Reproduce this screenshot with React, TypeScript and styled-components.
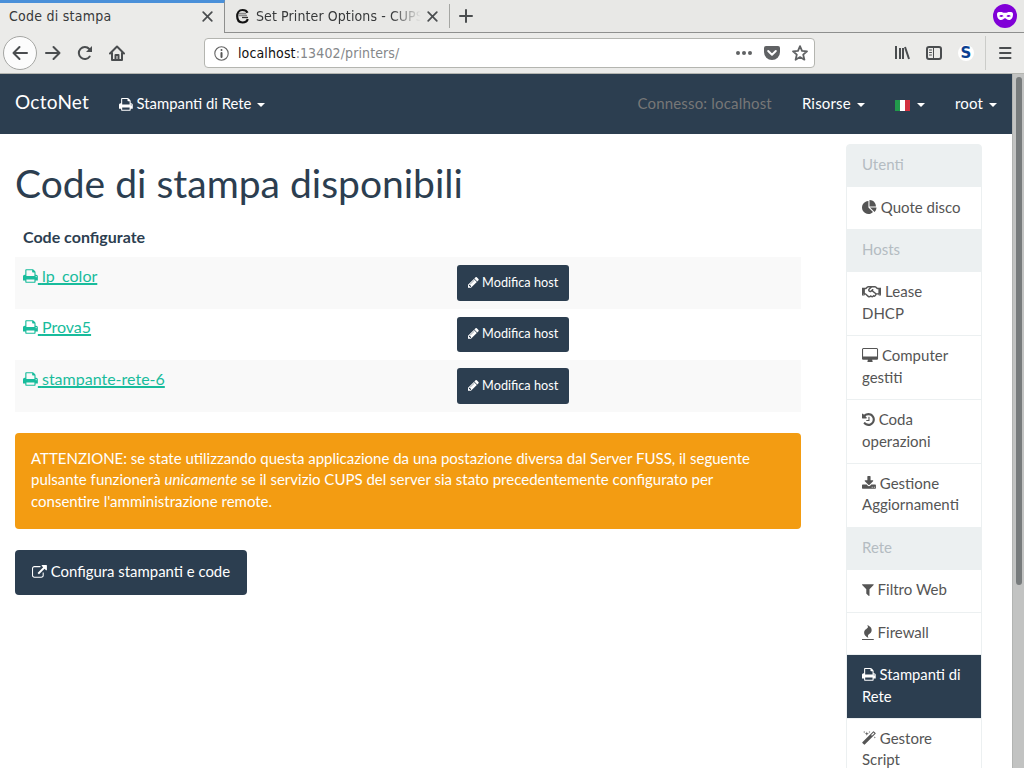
import React from "react";
import styled, { createGlobalStyle, css } from "styled-components";
import { FaRegHandshake } from "react-icons/fa";

const Global = createGlobalStyle`
  * { box-sizing: border-box; }
  body {
    margin: 0;
    background: #fff;
    color: #2c3e50;
    font: 15px/21.43px Lato, "Liberation Sans", sans-serif;
    overflow: hidden;
  }
`;

/* ---------- icons ---------- */

const glyphs = {
  print: { x: 64, w: 1664, d: "M448 1536h896v-256h-896v256zm0-640h896v-384h-160q-40 0-68-28t-28-68v-160h-640v640zm1152 64q0-26-19-45t-45-19-45 19-19 45 19 45 45 19 45-19 19-45zm128 0v416q0 13-9.5 22.5t-22.5 9.5h-224v160q0 40-28 68t-68 28h-960q-40 0-68-28t-28-68v-160h-224q-13 0-22.5-9.5t-9.5-22.5v-416q0-79 56.5-135.5t135.5-56.5h64v-544q0-40 28-68t68-28h672q40 0 88 20t76 48l152 152q28 28 48 76t20 88v256h64q79 0 135.5 56.5t56.5 135.5z" },
  pencil: { x: 128, w: 1536, d: "M491 1536l91-91-235-235-91 91v107h128v128h107zm523-928q0-22-22-22-10 0-17 7l-542 542q-7 7-7 17 0 22 22 22 10 0 17-7l542-542q7-7 7-17zm-54-192l416 416-832 832h-416v-416zm683 96q0 53-37 90l-166 166-416-416 166-165q36-38 90-38 53 0 91 38l235 234q37 39 37 91z" },
  external: { x: 0, w: 1792, d: "M1408 928v320q0 119-84.5 203.5t-203.5 84.5h-832q-119 0-203.5-84.5t-84.5-203.5v-832q0-119 84.5-203.5t203.5-84.5h704q14 0 23 9t9 23v64q0 14-9 23t-23 9h-704q-66 0-113 47t-47 113v832q0 66 47 113t113 47h832q66 0 113-47t47-113v-320q0-14 9-23t23-9h64q14 0 23 9t9 23zm384-864v512q0 26-19 45t-45 19-45-19l-176-176-652 652q-10 10-23 10t-23-10l-114-114q-10-10-10-23t10-23l652-652-176-176q-19-19-19-45t19-45 45-19h512q26 0 45 19t19 45z" },
  history: { x: 128, w: 1536, d: "M1664 896q0 156-61 298t-164 245-245 164-298 61q-172 0-327-72.5t-264-204.5q-7-10-6.5-22.5t8.5-20.5l137-138q10-9 25-9 16 2 23 12 73 95 179 147t225 52q104 0 198.5-40.5t163.5-109.5 109.5-163.5 40.5-198.5-40.5-198.5-109.5-163.5-163.5-109.5-198.5-40.5q-98 0-188 35.5t-160 101.5l137 138q31 30 14 69-17 40-59 40h-448q-26 0-45-19t-19-45v-448q0-42 40-59 39-17 69 14l130 129q107-101 244.5-156.5t284.5-55.5q156 0 298 61t245 164 164 245 61 298zm-640-288v448q0 14-9 23t-23 9h-320q-14 0-23-9t-9-23v-64q0-14 9-23t23-9h224v-352q0-14 9-23t23-9h64q14 0 23 9t9 23z" },
  desktop: { x: -64, w: 1920, d: "M1728 992v-832q0-13-9.5-22.5t-22.5-9.5h-1600q-13 0-22.5 9.5t-9.5 22.5v832q0 13 9.5 22.5t22.5 9.5h1600q13 0 22.5-9.5t9.5-22.5zm128-832v1088q0 66-47 113t-113 47h-544q0 37 16 77.5t32 71 16 43.5q0 26-19 45t-45 19h-512q-26 0-45-19t-19-45q0-14 16-44t32-70 16-78h-544q-66 0-113-47t-47-113v-1088q0-66 47-113t113-47h1600q66 0 113 47t47 113z" },
  download: { x: 64, w: 1664, d: "M1344 1344q0-26-19-45t-45-19-45 19-19 45 19 45 45 19 45-19 19-45zm256 0q0-26-19-45t-45-19-45 19-19 45 19 45 45 19 45-19 19-45zm128-224v320q0 40-28 68t-68 28h-1472q-40 0-68-28t-28-68v-320q0-40 28-68t68-28h465l135 136q58 56 136 56t136-56l136-136h464q40 0 68 28t28 68zm-325-569q17 41-14 70l-448 448q-18 19-45 19t-45-19l-448-448q-31-29-14-70 17-39 59-39h256v-448q0-26 19-45t45-19h256q26 0 45 19t19 45v448h256q42 0 59 39z" },
  filter: { x: 192, w: 1408, d: "M1595 295q17 41-14 70l-493 493v742q0 42-39 59-13 5-25 5-27 0-45-19l-256-256q-19-19-19-45v-486l-493-493q-31-29-14-70 17-39 59-39h1280q42 0 59 39z" },
  pie: { x: 0, w: 1792, d: "M768 890l546 546q-106 108-247.5 168t-298.5 60q-209 0-385.5-103t-279.5-279.5-103-385.5 103-385.5 279.5-279.5 385.5-103v762zm187 6h773q0 157-60 298.5t-168 247.5zm709-128h-768v-768q209 0 385.5 103t279.5 279.5 103 385.5z" },
  fire: { x: 192, w: 1408, d: "M1600 1696v64q0 13-9.5 22.5t-22.5 9.5h-1344q-13 0-22.5-9.5t-9.5-22.5v-64q0-13 9.5-22.5t22.5-9.5h1344q13 0 22.5 9.5t9.5 22.5zm-256-1056q0 78-24.5 144t-64 112.5-87.5 88-96 77.5-87.5 72-64 81.5-24.5 96.5q0 96 67 224l-4-1 1 1q-90-41-160-83t-138.5-100-113.5-122.5-72.5-150.5-27.5-184q0-78 24.5-144t64-112.5 87.5-88 96-77.5 87.5-72 64-81.5 24.5-96.5q0-94-66-224l3 1-1-1q90 41 160 83t138.5 100 113.5 122.5 72.5 150.5 27.5 184z" },
  magic: { x: 64, w: 1664, d: "M1254 581l293-293-107-107-293 293zm447-293q0 27-18 45l-1286 1286q-18 18-45 18t-45-18l-198-198q-18-18-18-45t18-45l1286-1286q18-18 45-18t45 18l198 198q18 18 18 45zm-1351-190l98 30-98 30-30 98-30-98-98-30 98-30 30-98zm350 162l196 60-196 60-60 196-60-196-196-60 196-60 60-196zm930 478l98 30-98 30-30 98-30-98-98-30 98-30 30-98zm-640-640l98 30-98 30-30 98-30-98-98-30 98-30 30-98z" },
};
type GlyphName = keyof typeof glyphs;

const GlyphSvg = styled.svg<{ $ratio: number }>`
  display: inline-block;
  height: 1em;
  width: ${(p) => p.$ratio}em;
  vertical-align: -0.143em;
  fill: currentColor;
  overflow: visible;
`;
const Glyph = ({ name }: { name: GlyphName }) => {
  const g = glyphs[name];
  return (
    <GlyphSvg $ratio={g.w / 1792} viewBox={`${g.x} 0 ${g.w} 1792`}>
      <path d={g.d} />
    </GlyphSvg>
  );
};
const Handshake = styled(FaRegHandshake)`
  width: 1.286em;
  height: 1.03em;
  vertical-align: -0.143em;
`;

/* ---------- browser chrome ---------- */

const Chrome = styled.header`
  height: 74px;
  background: #ebebe9;
  border-bottom: 1px solid #b4b5b0;
  font: 14px/20px "DejaVu Sans Condensed", "DejaVu Sans", sans-serif;
  font-stretch: condensed;
  letter-spacing: 0.1px;
  color: #37393a;
`;
const TabBar = styled.div`
  display: flex;
  height: 33px;
  background: #e8e8e6;
`;
const Tab = styled.div<{ $active?: boolean }>`
  display: flex;
  align-items: center;
  flex: none;
  width: 224px;
  padding: 0 11px 0 9px;
  border-bottom: 1px solid #8e8f8e;
  ${(p) =>
    p.$active &&
    css`
      width: 225px;
      border-top: 3px solid #4a90d9;
      border-bottom: 0;
      border-right: 1px solid #8e8f8e;
      background: #ebebe9;
      padding-bottom: 4px;
      letter-spacing: 0.25px;
    `}
`;
const TabTitle = styled.span<{ $fade?: boolean }>`
  flex: 1;
  overflow: hidden;
  white-space: nowrap;
  ${(p) => p.$fade && css`
    margin: 0 6px 0 6px;
    mask-image: linear-gradient(to right, #000 82%, transparent);
  `}
`;
const TabRest = styled.div`
  flex: 1;
  display: flex;
  align-items: center;
  justify-content: space-between;
  padding: 0 7px 0 0;
  border-bottom: 1px solid #8e8f8e;
`;
const NewTab = styled.div`
  display: flex;
  align-items: center;
  height: 24px;
  padding-left: 9px;
  border-left: 1px solid #a5a6a3;
`;
const Toolbar = styled.div`
  display: flex;
  align-items: center;
  height: 40px;
  padding: 0 12px 0 3px;
`;
const Back = styled.div`
  width: 34px;
  height: 34px;
  display: grid;
  place-items: center;
  border: 1px solid #a5a6a3;
  border-radius: 50%;
  background: #fcfcfc;
`;
const NavIcons = styled.div`
  display: flex;
  gap: 16px;
  padding: 0 79px 0 8px;
`;
const UrlBox = styled.div`
  display: flex;
  align-items: center;
  width: 611px;
  height: 30px;
  padding: 0 6px 0 9px;
  background: #fff;
  border: 1px solid #b4b5b0;
  border-radius: 4px;
`;
const Url = styled.span`
  flex: 1;
  padding-left: 9px;
  color: #85878a;
  letter-spacing: 0.12px;
  b { font-weight: normal; color: #111; }
`;
const UrlIcons = styled.div`
  display: flex;
  gap: 12px;
`;
const ToolIcons = styled.div`
  display: flex;
  align-items: center;
  gap: 16px;
  margin-left: auto;
`;
const ToolDivider = styled.span`
  width: 1px;
  height: 34px;
  margin: 0 -5px 0 -5px;
  background: #cbccc9;
`;
const ToolMenu = styled.span`
  display: flex;
  margin-left: 1px;
`;
const Line = styled.svg`
  display: block;
  flex: none;
  fill: none;
  stroke: #4a4d4f;
  stroke-width: 2;
  stroke-linecap: round;
  stroke-linejoin: round;
`;

const CloseX = () => (
  <Line width="11" height="11" viewBox="0 0 11 11"><path d="M1.2 1.2l8.6 8.6M9.8 1.2l-8.6 8.6" strokeWidth="1.7" /></Line>
);
const SBadge = styled.span`
  width: 16px;
  height: 16px;
  border-radius: 50%;
  background: #fff;
  color: #0b3f91;
  font: bold 15px/17px "DejaVu Sans", sans-serif;
  text-align: center;
`;

const BrowserChrome = () => (
  <Chrome>
    <TabBar>
      <Tab $active><TabTitle>Code di stampa</TabTitle><CloseX /></Tab>
      <Tab>
        <svg width="16" height="16" viewBox="0 0 16 16">
          <path d="M13.500 4.800C12.600 2.700 10.500 2 8.500 2C5 2 3.200 4.800 3.200 8.300s1.800 6.200 5.300 6.200C11.500 14.500 13.200 13 13.700 11" fill="none" stroke="#111" strokeWidth="2.200" />
          <path d="M5 5.500h7M4.500 7.500h8.500" stroke="#8a8a8a" strokeWidth="1.300" />
          <path d="M8 9.500h6" stroke="#333" strokeWidth="1.300" />
        </svg>
        <TabTitle $fade>Set Printer Options - CUPS</TabTitle><CloseX />
      </Tab>
      <TabRest>
        <NewTab><Line width="14" height="14" viewBox="0 0 14 14"><path d="M7 1v12M1 7h12" /></Line></NewTab>
        <svg width="24" height="24" viewBox="0 0 24 24">
          <circle cx="12" cy="12" r="12" fill="#8000d7" />
          <path fillRule="evenodd" fill="#fff" d="M4 10c0-1.800 1.500-2 3.500-2 2 0 2.500.8 4.500.8S14.500 8 16.500 8c2 0 3.500.2 3.500 2 0 3.500-1.400 6-4 6-2 0-2.600-1.800-4-1.800S10 16 8 16c-2.600 0-4-2.500-4-6zm2.300 2c.7 1.200 3.500 1.200 4.200 0-.9-1.500-3.300-1.500-4.200 0zm7.200 0c.7 1.200 3.500 1.200 4.200 0-.9-1.500-3.300-1.500-4.200 0z" />
        </svg>
      </TabRest>
    </TabBar>
    <Toolbar>
      <Back><Line width="16" height="16" viewBox="0 0 16 16"><path d="M15 8H1.500M7.500 2l-6 6 6 6" /></Line></Back>
      <NavIcons>
        <Line width="16" height="16" viewBox="0 0 16 16"><path d="M1 8h13.500M8.500 2l6 6-6 6" /></Line>
        <Line width="16" height="16" viewBox="0 0 16 16"><path d="M12.700 11.500A6 6 0 1 1 12.300 4L14 6" /><path d="M15 1v6H9z" fill="#4a4d4f" stroke="none" /></Line>
        <Line width="16" height="16" viewBox="0 0 16 16"><path d="M1 8.500L8 1.500l7 7M3 8v7h10V8" /><path d="M6.500 15v-5h3v5" /></Line>
      </NavIcons>
      <UrlBox>
        <Line width="15" height="15" viewBox="0 0 15 15"><circle cx="7.500" cy="7.500" r="6.700" strokeWidth="1.100" stroke="#666" /><path d="M7.500 7v4M7.500 4v.1" stroke="#555" /></Line>
        <Url><b>localhost</b>:13402/printers/</Url>
        <UrlIcons>
          <svg width="16" height="16" viewBox="0 0 16 16" fill="#606264"><circle cx="2" cy="8" r="2" /><circle cx="8" cy="8" r="2" /><circle cx="14" cy="8" r="2" /></svg>
          <svg width="16" height="16" viewBox="0 0 16 16"><path d="M2 1h12q2 0 2 2v4a8 8 0 0 1-16 0V3q0-2 2-2z" fill="#606264" /><path d="M4.200 6l3.800 3.700L11.800 6" fill="none" stroke="#fff" strokeWidth="2" strokeLinecap="round" strokeLinejoin="round" /></svg>
          <Line width="16" height="16" viewBox="0 0 16 16"><path d="M8 1.200l2 4.600 5 .5-3.800 3.300L12.400 14.700 8 12.100l-4.400 2.600L4.800 9.600 1 6.300l5-.5z" strokeWidth="1.800" stroke="#606264" /></Line>
        </UrlIcons>
      </UrlBox>
      <ToolIcons>
        <Line width="16" height="16" viewBox="0 0 16 16"><path d="M2 1v13M6 3v11M9 3v11M11 2l4 12" strokeLinecap="butt" /></Line>
        <Line width="16" height="16" viewBox="0 0 16 16"><rect x="1" y="2" width="14" height="12" rx="2" /><path d="M7.500 2v12M3.500 5h2M3.500 7.500h2M3.500 10h2" strokeWidth="1" /></Line>
        <SBadge>S</SBadge>
        <ToolDivider />
        <ToolMenu><Line width="14" height="14" viewBox="0 0 14 14"><path d="M2 2h10.500M2 7h10.500M2 12h10.500" /></Line></ToolMenu>
      </ToolIcons>
    </Toolbar>
  </Chrome>
);

/* ---------- page ---------- */

const Viewport = styled.div`
  display: flex;
  height: 694px;
  overflow: hidden;
`;
const Page = styled.div`
  flex: 1;
  height: 694px;
  overflow: hidden;
`;
const ScrollTrack = styled.div`
  width: 12px;
  padding: 3px 2px 0 3px;
  background: #c2c3c2;
  border-left: 1px solid #b2b4b2;
`;
const ScrollThumb = styled.div`
  width: 6px;
  height: 508px;
  border-radius: 3px;
  background: #777b7c;
`;
const Navbar = styled.nav`
  display: flex;
  align-items: center;
  height: 60px;
  padding: 0 15px;
  background: #2c3e50;
  color: #fff;
`;
const Brand = styled.span`
  width: 104px;
  padding-bottom: 4px;
  font-size: 19px;
  letter-spacing: 0.25px;
`;
const NavItem = styled.span<{ $muted?: boolean; $tight?: boolean }>`
  display: flex;
  align-items: center;
  white-space: pre;
  color: ${(p) => (p.$muted ? "#777" : "#fff")};
  letter-spacing: ${(p) => (p.$tight ? "normal" : "0.18px")};
  font-size: ${(p) => (p.$tight ? "14.85px" : "15px")};
`;
const NavRight = styled.div`
  display: flex;
  gap: 30px;
  margin-left: auto;
`;
const Caret = styled.span`
  margin-left: 6px;
  margin-top: 2px;
  border: 4px solid transparent;
  border-top-color: currentColor;
  border-bottom: 0;
`;
const Flag = styled.span`
  width: 15px;
  height: 11px;
  margin-top: 2px;
  margin-right: 1px;
  background: linear-gradient(to right, #219a4b 33%, #fff 33% 67%, #d32f3e 67%);
`;
const Columns = styled.div`
  display: flex;
  justify-content: space-between;
  padding: 0 30px 0 15px;
`;
const Main = styled.main`
  width: 786px;
  padding-top: 28px;
`;
const Title = styled.h1`
  margin: 0 0 13px;
  font-size: 39px;
  font-weight: 400;
  line-height: 43px;
`;
const Table = styled.div`
  display: grid;
  font-size: 16px;
`;
const HeadRow = styled.div`
  height: 39px;
  padding: 8px 8px 0;
  font-weight: 700;
  font-size: 16px;
  letter-spacing: normal;
`;
const Row = styled.div<{ $striped: boolean }>`
  display: grid;
  grid-template-columns: 434px 1fr;
  align-items: start;
  height: 51.5px;
  padding: 8px;
  background: ${(p) => (p.$striped ? "#f9f9f9" : "#fff")};
`;
const PrinterLink = styled.a`
  margin-top: -0.4px;
  color: #18bc9c;
  white-space: pre;
  span { text-decoration: underline; text-decoration-skip-ink: none; text-decoration-thickness: 2px; text-underline-offset: 1px; }
`;
const Button = styled.button<{ $small?: boolean }>`
  display: inline-block;
  justify-self: start;
  height: ${(p) => (p.$small ? "35.5px" : "45px")};
  padding: ${(p) => (p.$small ? "0 11px 2px" : "0 17px 1.4px")};
  border: 0;
  border-radius: ${(p) => (p.$small ? "3px" : "4px")};
  background: #2c3e50;
  color: #fff;
  font-family: inherit;
  font-size: ${(p) => (p.$small ? "12.7px" : "14.92px")};
  white-space: nowrap;
`;
const Alert = styled.p`
  height: 96px;
  margin: 21px 0;
  padding: 15.4px 16px 0;
  border-radius: 4px;
  background: #f39c12;
  color: #fff;
`;
const Sidebar = styled.aside`
  width: 136px;
  margin-top: 10px;
`;
const SideItem = styled.div<{ $kind?: "heading" | "active" }>`
  margin-bottom: -1px;
  padding: 9.2px 15px 10.8px;
  border: 1px solid #ecf0f1;
  color: #555;
  &:first-child { border-radius: 4px 4px 0 0; }
  ${(p) => p.$kind === "heading" && css`
    background: #ecf0f1;
    color: #b4bcc2;
  `}
  ${(p) => p.$kind === "active" && css`
    background: #2c3e50;
    background-clip: padding-box;
    color: #fff;
    font-size: 14.8px;
  `}
`;

const printers = ["lp_color", "Prova5", "stampante-rete-6"];

const App = () => (
  <>
    <Global />
    <BrowserChrome />
    <Viewport>
      <Page>
        <Navbar>
          <Brand>OctoNet</Brand>
          <NavItem $tight><Glyph name="print" /> Stampanti di Rete<Caret /></NavItem>
          <NavRight>
            <NavItem $muted>Connesso: localhost</NavItem>
            <NavItem>Risorse<Caret /></NavItem>
            <NavItem><Flag /><Caret /></NavItem>
            <NavItem>root<Caret /></NavItem>
          </NavRight>
        </Navbar>
        <Columns>
          <Main>
            <Title>Code di stampa disponibili</Title>
            <Table>
              <HeadRow>Code configurate</HeadRow>
              {printers.map((name, i) => (
                <Row key={name} $striped={i % 2 === 0}>
                  <PrinterLink><Glyph name="print" /><span> {name}</span></PrinterLink>
                  <Button $small><Glyph name="pencil" /> Modifica host</Button>
                </Row>
              ))}
            </Table>
            <Alert>
              ATTENZIONE: se state utilizzando questa applicazione da una postazione diversa dal Server FUSS, il seguente pulsante funzionerà <em>unicamente</em> se il servizio CUPS del server sia stato precedentemente configurato per consentire l'amministrazione remote.
            </Alert>
            <Button><Glyph name="external" /> Configura stampanti e code</Button>
          </Main>
          <Sidebar>
            <SideItem $kind="heading">Utenti</SideItem>
            <SideItem><Glyph name="pie" /> Quote disco</SideItem>
            <SideItem $kind="heading">Hosts</SideItem>
            <SideItem><Handshake /> Lease DHCP</SideItem>
            <SideItem><Glyph name="desktop" /> Computer gestiti</SideItem>
            <SideItem><Glyph name="history" /> Coda operazioni</SideItem>
            <SideItem><Glyph name="download" /> Gestione Aggiornamenti</SideItem>
            <SideItem $kind="heading">Rete</SideItem>
            <SideItem><Glyph name="filter" /> Filtro Web</SideItem>
            <SideItem><Glyph name="fire" /> Firewall</SideItem>
            <SideItem $kind="active"><Glyph name="print" /> Stampanti di Rete</SideItem>
            <SideItem><Glyph name="magic" /> Gestore Script</SideItem>
          </Sidebar>
        </Columns>
      </Page>
      <ScrollTrack><ScrollThumb /></ScrollTrack>
    </Viewport>
  </>
);

export default App;
